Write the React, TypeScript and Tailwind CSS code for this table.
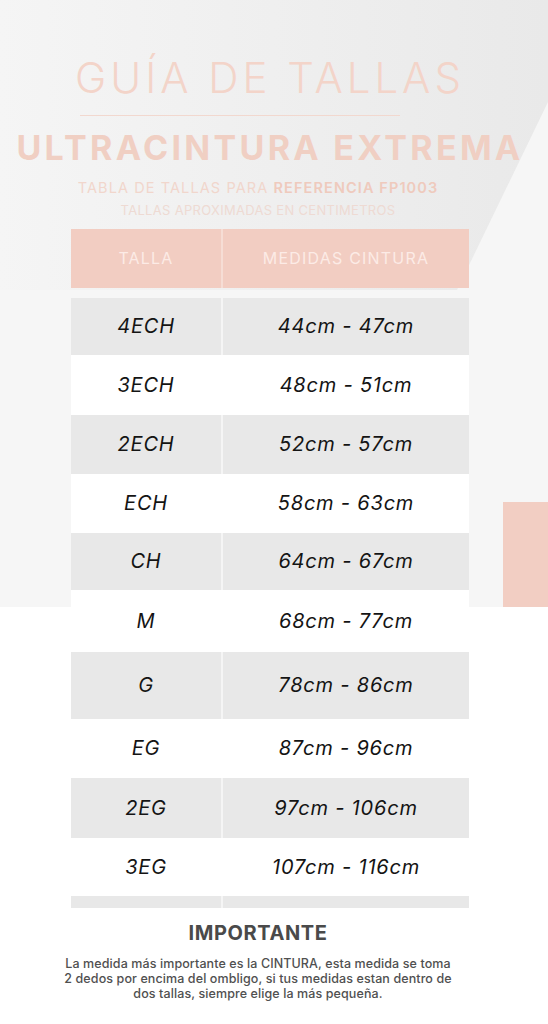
import React from "react";

interface Row {
  size: string;
  range: string;
  h: string; // full tailwind height class
}

const rows: Row[] = [
  { size: "4ECH", range: "44cm - 47cm", h: "h-[57px]" },
  { size: "3ECH", range: "48cm - 51cm", h: "h-[60px]" },
  { size: "2ECH", range: "52cm - 57cm", h: "h-[59px]" },
  { size: "ECH", range: "58cm - 63cm", h: "h-[59px]" },
  { size: "CH", range: "64cm - 67cm", h: "h-[57px]" },
  { size: "M", range: "68cm - 77cm", h: "h-[62px]" },
  { size: "G", range: "78cm - 86cm", h: "h-[67px]" },
  { size: "EG", range: "87cm - 96cm", h: "h-[59px]" },
  { size: "2EG", range: "97cm - 106cm", h: "h-[60px]" },
  { size: "3EG", range: "107cm - 116cm", h: "h-[58px]" },
];

export default function App() {
  return (
    <div className="relative w-[548px] h-[1024px] overflow-hidden bg-white font-['Inter','Liberation_Sans',sans-serif]">
      {/* background decoration */}
      <div className="absolute left-0 top-0 w-full h-[607px] bg-gradient-to-r from-[#f5f5f5] to-[#e9e9e9]">
        <svg className="absolute inset-0" width="548" height="607" viewBox="0 0 548 607">
          <polygon points="0,290 457,290 548,102 548,607 0,607" fill="#f6f6f6" />
        </svg>
        <div className="absolute right-0 top-[502px] w-[45px] h-[105px] bg-[#f2cec3]" />
      </div>

      <div className="relative w-[540px] flex flex-col items-center">
        <h1 className="mt-[57px] text-[42px] leading-none font-light tracking-[4px] text-[#f3d4c9]">
          GUÍA DE TALLAS
        </h1>
        <div className="mt-[16px] w-[320px] h-px bg-[#f2d8cf] -translate-x-[30px]" />
        <h2 className="mt-[15px] text-[34px] leading-none font-bold tracking-[3.3px] text-[#f0cfc3]">
          ULTRACINTURA EXTREMA
        </h2>
        <p className="mt-[16px] mr-[24px] text-[14.5px] leading-none text-[#f1d6cc] tracking-[1.1px]">
          TABLA DE TALLAS PARA <span className="font-semibold text-[#efcabd]">REFERENCIA FP1003</span>
        </p>
        <p className="mt-[8px] mr-[24px] text-[13px] leading-none text-[#eedad3] tracking-[0.3px]">
          TALLAS APROXIMADAS EN CENTIMETROS
        </p>

        <div className="mt-[12px] w-[398px] flex flex-col">
          <div className="flex h-[59px] bg-[#f2cdc2] text-[16px] text-[#fcebe6] tracking-[1.2px]">
            <div className="w-[150px] flex items-center justify-center">TALLA</div>
            <div className="w-[2px] bg-[#f6ddd5]" />
            <div className="flex-1 flex items-center justify-center">MEDIDAS CINTURA</div>
          </div>
          <div className="h-[10px]" />
          {rows.map((r, i) => (
            <div
              key={r.size}
              className={`flex ${r.h} ${i % 2 === 0 ? "bg-[#e8e8e8]" : "bg-white"} text-[20px] italic text-[#141414] tracking-[0.8px]`}>
              <div className="w-[150px] flex items-center justify-center">{r.size}</div>
              <div className={`w-[2px] ${i % 2 === 0 ? "bg-[#f5f5f5]" : "bg-white"}`} />
              <div className="flex-1 flex items-center justify-center">{r.range}</div>
            </div>
          ))}
          <div className="flex h-[12px] bg-[#e8e8e8]">
            <div className="w-[150px]" />
            <div className="w-[2px] bg-[#f5f5f5]" />
            <div className="flex-1" />
          </div>
        </div>

        <h3 className="mt-[15px] mr-[24px] text-[20px] leading-none font-bold text-[#4a4a4a] tracking-[0.6px]">
          IMPORTANTE
        </h3>
        <p className="mt-[13px] mr-[24px] text-center text-[12.5px] leading-[15px] font-medium text-[#505050] whitespace-nowrap tracking-[0.1px]">
          La medida más importante es la CINTURA, esta medida se toma
          <br />
          2 dedos por encima del ombligo, si tus medidas estan dentro de
          <br />
          dos tallas, siempre elige la más pequeña.
        </p>
      </div>
    </div>
  );
}
